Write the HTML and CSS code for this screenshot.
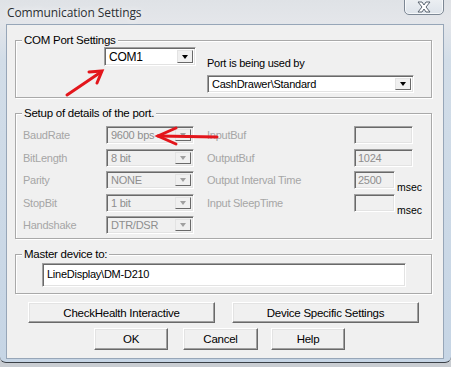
FILE: index.html
```html
<!DOCTYPE html>
<html lang="en">
<head>
    <meta charset="UTF-8">
    <title>Communication Settings</title>
    <link rel="stylesheet" href="styles.css">
</head>
<body>

<div class="frame">
    <div class="titlebar">
        <span class="title">Communication Settings</span>
        <div class="close-btn">
            <svg width="18" height="12" viewBox="0 0 18 12">
                <path d="M3 1 H7 L9 4 L11 1 H15 L11 6 L15 11 H11 L9 8 L7 11 H3 L7 6 Z" fill="#fff" stroke="#5a6470" stroke-width="1" stroke-linejoin="round"/>
            </svg>
        </div>
    </div>

    <div class="client">
        <!-- COM port -->
        <div class="group group-com">
            <span class="legend">COM Port Settings</span>
            <div class="combo com-combo">
                <span class="combo-text">COM1</span>
                <span class="drop"><i class="arrow"></i></span>
            </div>
            <div class="used-by">
                <span class="label">Port is being used by</span>
                <div class="combo used-combo">
                    <span class="combo-text">CashDrawer\Standard</span>
                    <span class="drop"><i class="arrow"></i></span>
                </div>
            </div>
        </div>

        <!-- port details, all disabled -->
        <div class="group group-setup">
            <span class="legend">Setup of details of the port.</span>
            <div class="setup-grid">
                <span class="label dim">BaudRate</span>
                <div class="combo off"><span class="combo-text">9600 bps</span><span class="drop"><i class="arrow"></i></span></div>
                <span class="label dim">InputBuf</span>
                <div class="field-cell"><div class="field off wide"></div></div>

                <span class="label dim">BitLength</span>
                <div class="combo off"><span class="combo-text">8 bit</span><span class="drop"><i class="arrow"></i></span></div>
                <span class="label dim">OutputBuf</span>
                <div class="field-cell"><div class="field off wide">1024</div></div>

                <span class="label dim">Parity</span>
                <div class="combo off"><span class="combo-text">NONE</span><span class="drop"><i class="arrow"></i></span></div>
                <span class="label dim">Output Interval Time</span>
                <div class="field-cell"><div class="field off short">2500</div><span class="unit">msec</span></div>

                <span class="label dim">StopBit</span>
                <div class="combo off"><span class="combo-text">1 bit</span><span class="drop"><i class="arrow"></i></span></div>
                <span class="label dim">Input SleepTime</span>
                <div class="field-cell"><div class="field off short"></div><span class="unit">msec</span></div>

                <span class="label dim">Handshake</span>
                <div class="combo off"><span class="combo-text">DTR/DSR</span><span class="drop"><i class="arrow"></i></span></div>
            </div>
        </div>

        <!-- master device -->
        <div class="group group-master">
            <span class="legend">Master device to:</span>
            <div class="field master-field">LineDisplay\DM-D210</div>
        </div>

        <div class="btn-row row-wide">
            <button class="btn wide-btn">CheckHealth Interactive</button>
            <button class="btn wide-btn">Device Specific Settings</button>
        </div>
        <div class="btn-row row-main">
            <button class="btn">OK</button>
            <button class="btn btn-cancel">Cancel</button>
            <button class="btn">Help</button>
        </div>
    </div>

    <svg class="marks" width="451" height="367" viewBox="0 0 451 367">
        <g stroke="#e3161c" stroke-width="3" stroke-linecap="round" fill="none">
            <path d="M67 95 L101 72"/>
            <path d="M89 72 L102 71 L97 83"/>
            <path d="M158 136 L217 137"/>
            <path d="M176 128 L158 136 L176 144"/>
        </g>
    </svg>
</div>

</body>
</html>
```

FILE: styles.css
```css
body {
    margin: 0;
    padding: 0;
    width: 451px;
    height: 367px;
    overflow: hidden;
    background: #c9cdd2;
    font-family: 'Liberation Sans', Arial, sans-serif;
    font-size: 11px;
    letter-spacing: -0.25px;
    color: #000;
}
.frame {
    position: relative;
    width: 451px;
    height: 363px;
    box-sizing: border-box;
    padding: 0 0 0 7px;
    border-bottom: 1px solid #3b4047;
    border-radius: 0 0 6px 6px;
    background: linear-gradient(180deg, #dfe2e6 0px, #e4e6ea 22px, #d2dde8 60px, #c6d5e5 100%);
}
.titlebar {
    height: 25px;
    display: flex;
    justify-content: space-between;
    align-items: flex-start;
}
.title {
    font-family: 'Open Sans', 'Noto Sans', sans-serif;
    font-size: 12px;
    letter-spacing: -0.1px;
    color: #2b2f33;
    margin-top: 4px;
    text-shadow: 0 0 6px #fff;
}
.close-btn {
    width: 40px;
    height: 19px;
    margin-top: -4px;
    margin-right: 7px;
    box-sizing: border-box;
    border: 1px solid #7c8794;
    border-radius: 0 0 5px 5px;
    background: linear-gradient(180deg, #eef1f4, #dde3ea);
    box-shadow: inset 0 0 0 1px rgba(255,255,255,0.7);
    display: flex;
    align-items: center;
    justify-content: center;
    padding-top: 3px;
}
.client {
    width: 436px;
    height: 333px;
    box-sizing: border-box;
    padding: 15px 11px 0 8px;
    background: #f0f0f0;
    box-shadow: 0 0 0 1px #97a6b8;
}

/* group boxes */
.group {
    position: relative;
    box-sizing: border-box;
    border: 1px solid #a9a9a9;
    box-shadow: inset 1px 1px 0 #fff, 1px 1px 0 #fff;
}
.legend {
    position: absolute;
    top: -8px;
    left: 6px;
    padding: 0 2px;
    background: #f0f0f0;
    line-height: 14px;
    font-size: 11.5px;
}
.group-com {
    height: 58px;
    display: flex;
    padding: 6px 0 0 88px;
}
.group-setup {
    height: 126px;
    margin-top: 15px;
    padding: 12px 0 0 7px;
}
.group-master {
    height: 40px;
    margin-top: 15px;
    padding: 8px 0 0 26px;
}

.label {
    line-height: 14px;
    white-space: nowrap;
}
.dim {
    color: #a6a6a6;
}

/* classic sunken controls */
.combo, .field {
    box-sizing: border-box;
    border: 1px solid;
    border-color: #a0a0a0 #fff #fff #a0a0a0;
    box-shadow: inset 1px 1px 0 #696969, inset -1px -1px 0 #e3e3e3;
    background: #fff;
}
.combo {
    display: flex;
    align-items: center;
    justify-content: space-between;
    padding: 2px;
}
.combo-text {
    padding-left: 2px;
    line-height: 14px;
    white-space: nowrap;
}
.drop {
    width: 16px;
    align-self: stretch;
    box-sizing: border-box;
    background: #f0f0f0;
    border: 1px solid;
    border-color: #e3e3e3 #696969 #696969 #e3e3e3;
    display: flex;
    align-items: center;
    justify-content: center;
}
.arrow {
    width: 0;
    height: 0;
    border-left: 3.5px solid transparent;
    border-right: 3.5px solid transparent;
    border-top: 4px solid #000;
}
.com-combo {
    width: 92px;
    height: 19px;
    font-size: 12px;
}
.used-by {
    display: flex;
    flex-direction: column;
    margin-left: 11px;
}
.used-by .label {
    margin-top: 9px;
}
.used-combo {
    width: 207px;
    height: 18px;
    margin-top: 5px;
}

.combo.off, .field.off {
    background: #f0f0f0;
    color: #8e8e8e;
}
.combo.off .arrow {
    border-top-color: #a0a0a0;
}

.setup-grid {
    display: grid;
    grid-template-columns: 83px 101px 147px 80px;
    grid-auto-rows: 18px;
    row-gap: 4.5px;
    align-items: center;
}
.setup-grid .combo {
    width: 88px;
    height: 18px;
}
.field-cell {
    display: flex;
    align-items: flex-end;
    height: 18px;
}
.field {
    height: 18px;
    padding: 0 3px;
    line-height: 16px;
}
.field.wide {
    width: 59px;
}
.field.short {
    width: 41px;
}
.unit {
    font-size: 10.5px;
    letter-spacing: 0;
    line-height: 10px;
    margin: 0 0 -3px 2px;
}
.master-field {
    width: 364px;
    height: 24px;
    line-height: 20px;
    padding: 0 4px;
}

/* buttons */
.btn-row {
    display: flex;
}
.row-wide {
    margin-top: 8px;
    padding-left: 13px;
    gap: 17px;
}
.row-main {
    margin-top: 5px;
    padding-left: 79px;
    gap: 15px;
}
.btn {
    font: inherit;
    font-size: 11.5px;
    letter-spacing: -0.25px;
    color: #000;
    width: 74px;
    height: 22px;
    padding: 0;
    background: #f0f0f0;
    border: 1px solid;
    border-color: #fff #696969 #696969 #fff;
    box-shadow: inset -1px -1px 0 #a0a0a0, inset 1px 1px 0 #e3e3e3;
}
.wide-btn {
    width: 187px;
    height: 21px;
}
.btn-cancel {
    width: 75px;
    margin-right: -2px;
}

.marks {
    position: absolute;
    left: 0;
    top: 0;
    pointer-events: none;
}
```
